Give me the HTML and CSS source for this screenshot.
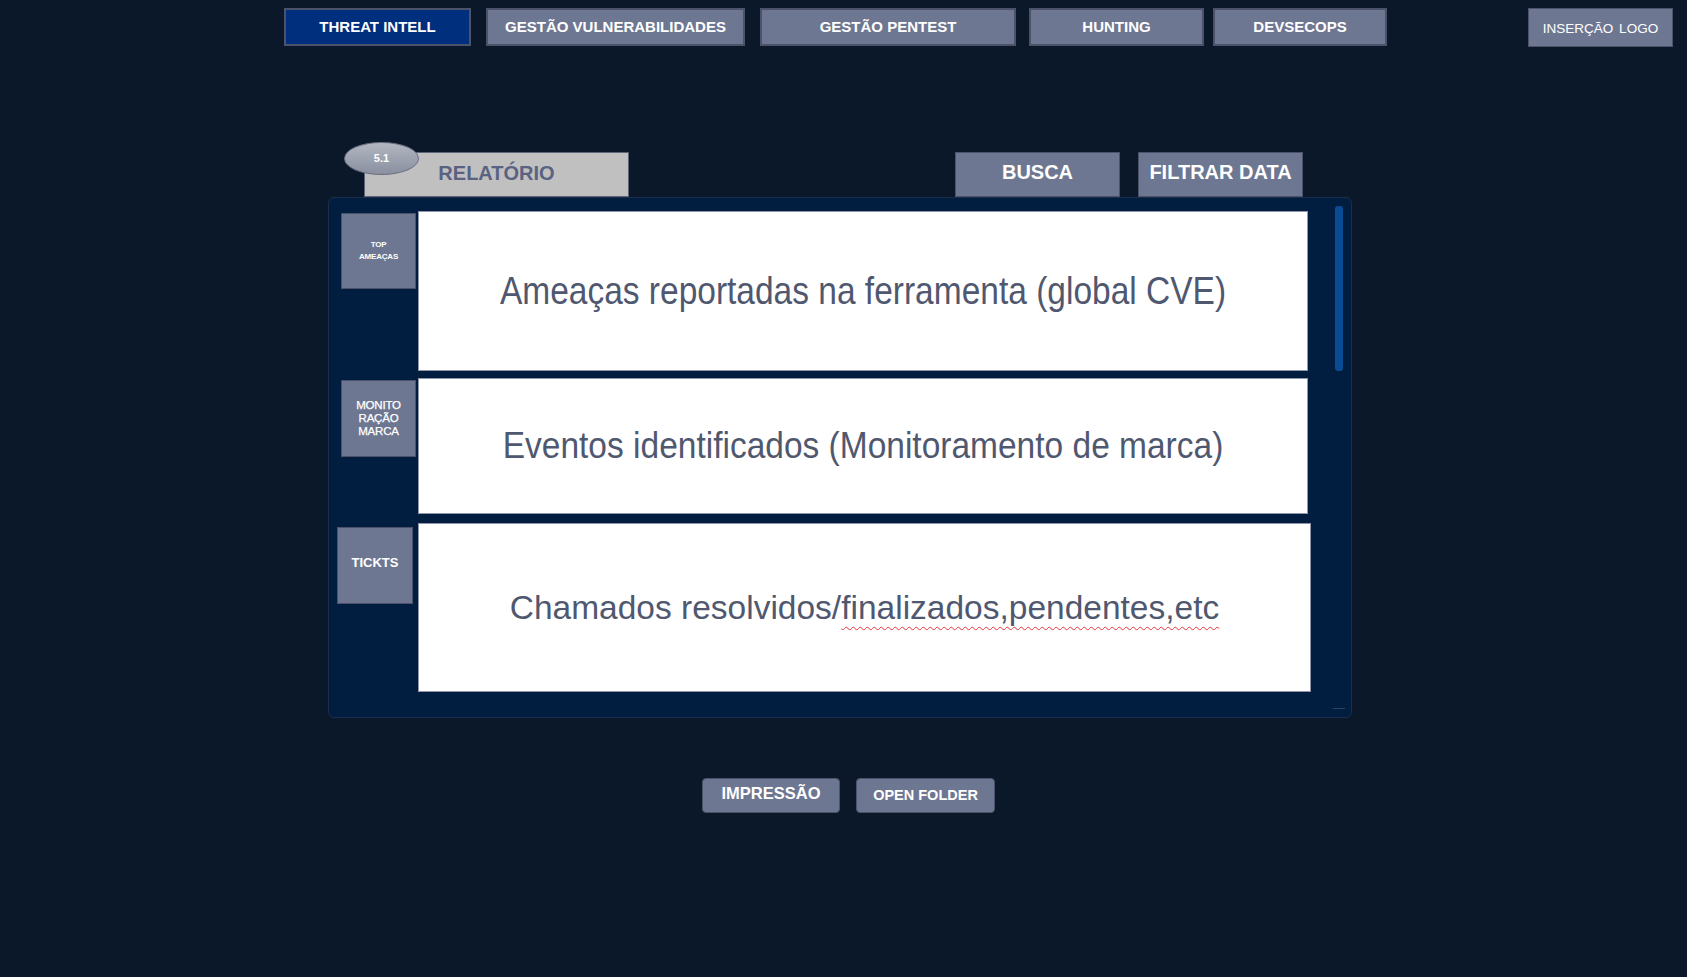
FILE: index.html
```html
<!DOCTYPE html>
<html lang="pt-BR">
<head>
<meta charset="utf-8">
<title>Threat Intell - Relatório</title>
<link rel="stylesheet" href="styles.css">
</head>
<body>
<header class="topbar">
  <nav class="nav">
    <a class="nav-btn nav-btn--active nav-btn--threat">THREAT INTELL</a>
    <a class="nav-btn nav-btn--vuln">GESTÃO VULNERABILIDADES</a>
    <a class="nav-btn nav-btn--pentest">GESTÃO PENTEST</a>
    <a class="nav-btn nav-btn--hunting">HUNTING</a>
    <a class="nav-btn nav-btn--devsecops">DEVSECOPS</a>
  </nav>
  <div class="logo-slot">INSERÇÃO LOGO</div>
</header>

<main class="report">
  <div class="tabs">
    <div class="tab-report">
      <span class="badge">5.1</span>
      <span class="tab-report-text">RELATÓRIO</span>
    </div>
    <div class="tab-actions">
      <button class="action-btn">BUSCA</button>
      <button class="action-btn">FILTRAR DATA</button>
    </div>
  </div>

  <section class="panel">
    <div class="rows">
      <div class="row row--threats">
        <div class="label label--threats"><span class="label-tiny">TOP<br>AMEAÇAS</span></div>
        <div class="card card--narrow"><span class="card-text card-text--tall">Ameaças reportadas na ferramenta (global CVE)</span></div>
      </div>
      <div class="row row--brand">
        <div class="label label--brand"><span class="label-small">MONITO<br>RAÇÃO<br>MARCA</span></div>
        <div class="card card--narrow"><span class="card-text card-text--mid">Eventos identificados (Monitoramento de marca)</span></div>
      </div>
      <div class="row row--tickets">
        <div class="label label--tickets"><span class="label-bold">TICKTS</span></div>
        <div class="card"><span class="card-text">Chamados resolvidos/<span class="spell">finalizados,pendentes,etc</span></span></div>
      </div>
    </div>
    <div class="scroll-track">
      <div class="scroll-thumb"></div>
      <div class="scroll-end"></div>
    </div>
  </section>

  <div class="footer-actions">
    <button class="foot-btn foot-btn--print">IMPRESSÃO</button>
    <button class="foot-btn foot-btn--folder">OPEN FOLDER</button>
  </div>
</main>
</body>
</html>
```

FILE: styles.css
```css
* { box-sizing: border-box; }

html, body {
  margin: 0;
  padding: 0;
  background: #0b1829;
  font-family: "Liberation Sans", Arial, sans-serif;
  height: 100%;
}

body {
  min-height: 977px;
  overflow: hidden;
}

/* ---------- top bar ---------- */
.topbar {
  display: flex;
  align-items: flex-start;
  padding: 8px 14px 0 284px;
  height: 47px;
}

.nav {
  display: flex;
}

.nav-btn {
  display: flex;
  align-items: center;
  justify-content: center;
  height: 38px;
  padding-bottom: 2px;
  background: #6e7792;
  border: 2px solid #4b5269;
  color: #ffffff;
  font-weight: bold;
  font-size: 15px;
  text-decoration: none;
  white-space: nowrap;
}

.nav-btn--active { background: #002f7e; }
.nav-btn--threat { width: 187px; }
.nav-btn--vuln { width: 259px; margin-left: 15px; }
.nav-btn--pentest { width: 256px; margin-left: 15px; }
.nav-btn--hunting { width: 175px; margin-left: 13px; }
.nav-btn--devsecops { width: 174px; margin-left: 9px; }

.logo-slot {
  margin-left: auto;
  width: 145px;
  height: 39px;
  padding-top: 2px;
  background: #6e7792;
  border: 1px solid #4b5269;
  color: #ffffff;
  font-size: 13.5px;
  display: flex;
  align-items: center;
  justify-content: center;
  word-spacing: 2px;
}

/* ---------- report area ---------- */
.report {
  padding-left: 328px;
  width: 1352px;
}

.tabs {
  display: flex;
  align-items: flex-end;
  margin-top: 105px;
  height: 45px;
}

.tab-report {
  position: relative;
  margin-left: 36px;
  width: 265px;
  height: 45px;
  background: #c0c0c0;
  border: 1px solid #5e6478;
  display: flex;
  align-items: center;
  justify-content: center;
  padding-bottom: 2px;
}

.tab-report-text {
  color: #5a6282;
  font-weight: bold;
  font-size: 20px;
}

.badge {
  position: absolute;
  left: -21px;
  top: -11px;
  width: 75px;
  height: 33px;
  border-radius: 50%;
  background: linear-gradient(180deg, #b2b6c0 0%, #9ca1af 55%, #8a90a0 100%);
  border: 1px solid #6a7080;
  color: #ffffff;
  font-weight: bold;
  font-size: 11px;
  display: flex;
  align-items: center;
  justify-content: center;
  padding-bottom: 2px;
}

.tab-actions {
  margin-left: auto;
  display: flex;
  gap: 18px;
  padding-right: 49px;
}

.action-btn {
  width: 165px;
  height: 45px;
  background: #6e7792;
  border: 1px solid #4b5269;
  color: #ffffff;
  font-family: inherit;
  font-weight: bold;
  font-size: 20px;
  padding: 0 0 4px 0;
  cursor: pointer;
}

/* ---------- main panel ---------- */
.panel {
  display: flex;
  width: 1024px;
  height: 521px;
  background: #011d40;
  border: 1px solid #1c2e4c;
  border-radius: 6px;
  padding: 6px 6px 5px 12px;
}

.rows {
  width: 970px;
  display: flex;
  flex-direction: column;
  padding-top: 7px;
}

.row {
  display: flex;
  align-items: flex-start;
  flex: none;
}

.row--threats { height: 160px; }
.row--brand { height: 136px; margin-top: 7px; }
.row--tickets { height: 169px; margin-top: 9px; }

.label {
  flex: none;
  width: 75px;
  margin-right: 2px;
  background: #6e7792;
  border: 1px solid #4b5269;
  color: #ffffff;
  display: flex;
  align-items: center;
  justify-content: center;
  text-align: center;
}

.label--threats {
  height: 76px;
  margin-top: 2px;
  align-items: flex-start;
  padding-top: 25px;
}

.label--brand {
  height: 77px;
  margin-top: 2px;
}

.label--tickets {
  height: 77px;
  margin-top: 4px;
  margin-left: -4px;
  width: 76px;
  margin-right: 5px;
  padding-bottom: 6px;
}

.label-tiny {
  font-size: 8px;
  font-weight: bold;
  line-height: 12px;
  letter-spacing: -0.2px;
}

.label-small {
  font-size: 11.5px;
  line-height: 13px;
  letter-spacing: -0.2px;
  -webkit-text-stroke: 0.25px #ffffff;
}

.label-bold {
  font-size: 13px;
  font-weight: bold;
}

.card {
  flex: 1;
  height: 100%;
  background: #ffffff;
  border: 1px solid #9096a8;
  display: flex;
  align-items: center;
  justify-content: center;
}

.card--narrow { margin-right: 3px; }

.card-text {
  display: inline-block;
  font-size: 33.5px;
  color: #50586f;
  white-space: nowrap;
}

.card-text--tall { transform: scaleY(1.15); }
.card-text--mid { transform: scaleY(1.1); }

.spell {
  text-decoration-line: underline;
  text-decoration-style: wavy;
  text-decoration-color: #e8343a;
  text-decoration-thickness: 1px;
  text-underline-offset: 7px;
}

.scroll-track {
  margin-left: 22px;
  width: 12px;
  display: flex;
  flex-direction: column;
  justify-content: space-between;
  align-items: center;
  padding: 2px 0 3px;
}

.scroll-thumb {
  width: 8px;
  height: 165px;
  background: #0a4b96;
  border-radius: 3px;
}

.scroll-end {
  width: 12px;
  height: 1px;
  background: #2a4264;
}

/* ---------- footer buttons ---------- */
.footer-actions {
  display: flex;
  gap: 16px;
  margin-top: 60px;
  padding-left: 374px;
}

.foot-btn {
  height: 35px;
  background: #6e7792;
  border: 1px solid #4b5269;
  border-radius: 4px;
  color: #ffffff;
  font-family: inherit;
  font-weight: bold;
  display: flex;
  justify-content: center;
  align-items: flex-start;
  padding: 0;
  cursor: pointer;
}

.foot-btn--print {
  width: 138px;
  font-size: 16.5px;
  padding-top: 5px;
}

.foot-btn--folder {
  width: 139px;
  font-size: 14.5px;
  padding-top: 8px;
}
```
